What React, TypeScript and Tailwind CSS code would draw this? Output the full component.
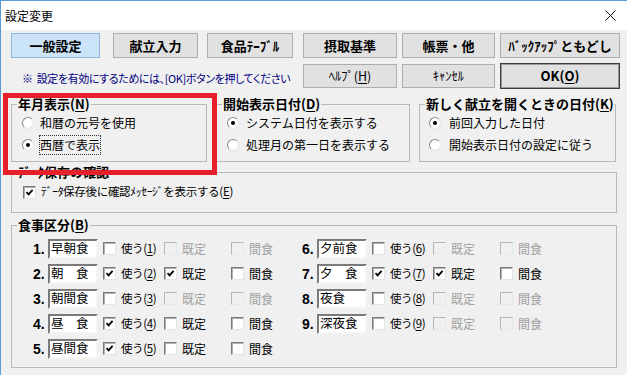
import React from "react";

const FONT = { fontFamily: '"Noto Sans CJK JP", "Noto Sans", sans-serif' };

function U({ children }: { children: React.ReactNode }) {
  return <span className="underline underline-offset-2">{children}</span>;
}

function Radio({ checked }: { checked?: boolean }) {
  return (
    <span className="w-[12px] h-[12px] rounded-full bg-white border border-t-[#8a8a8a] border-l-[#8a8a8a] border-b-[#e4e4e4] border-r-[#e4e4e4] flex items-center justify-center shrink-0">
      {checked && <span className="w-[4px] h-[4px] rounded-full bg-black" />}
    </span>
  );
}

function Check({ checked, disabled }: { checked?: boolean; disabled?: boolean }) {
  return (
    <span
      className={
        "w-[13px] h-[13px] border flex items-center justify-center shrink-0 " +
        (disabled
          ? "bg-[#f0f0f0] border-t-[#b5b5b5] border-l-[#b5b5b5] border-b-[#e8e8e8] border-r-[#e8e8e8]"
          : "bg-white border-t-[#7a7a7a] border-l-[#7a7a7a] border-b-[#e4e4e4] border-r-[#e4e4e4] shadow-[inset_1px_1px_0_#b0b0b0]")
      }
    >
      {checked && (
        <svg width="9" height="9" viewBox="0 0 9 9">
          <path d="M1.5 4.2 L3.6 6.4 L7.6 1.8" fill="none" stroke="#000" strokeWidth="1.8" />
        </svg>
      )}
    </span>
  );
}

function Btn({
  children,
  w,
  variant,
  bold = true,
  h = "h-[25px]",
}: {
  children: React.ReactNode;
  w: string;
  variant?: "active" | "default";
  bold?: boolean;
  h?: string;
}) {
  let cls = "bg-[#e1e1e1] border border-[#adadad]";
  if (variant === "active") cls = "bg-[#cce4f7] border border-[#8fb8e0]";
  if (variant === "default") cls = "bg-[#e1e1e1] border border-[#3c3c3c] shadow-[inset_0_0_0_1px_#9a9a9a]";
  return (
    <div
      className={`${w} ${h} ${cls} flex items-center justify-center shrink-0 text-black ${
        bold ? "font-bold text-[13px]" : "text-[12.5px]"
      }`}
    >
      {children}
    </div>
  );
}

function Group({
  title,
  className,
  children,
}: {
  title: React.ReactNode;
  className: string;
  children?: React.ReactNode;
}) {
  return (
    <fieldset className={`border border-[#b9b9b9] ${className}`}>
      <legend className="ml-[5px] px-[1px] text-[13px] font-bold leading-[16px] text-black">{title}</legend>
      {children}
    </fieldset>
  );
}

type Row = {
  n: string;
  name: string;
  use: boolean;
  def: boolean;
};

function MealRow({ r }: { r: Row }) {
  const dis = !r.use;
  return (
    <div className="flex items-center h-[25px] w-[269px]">
      <span
        className="w-[15px] text-[14px] font-bold leading-none text-black"
        style={{ fontFamily: '"Liberation Sans", Arial, sans-serif' }}
      >
        {r.n}.
      </span>
      <div className="w-[50px] h-[20px] bg-white border-2 border-t-[#7a7a7a] border-l-[#7a7a7a] border-b-[#f4f4f4] border-r-[#f4f4f4] flex items-center pl-[1px] text-[12.5px] leading-none text-black whitespace-pre">
        {r.name}
      </div>
      <div className="ml-[5px] w-[61px] flex items-center gap-[5px]">
        <Check checked={r.use} />
        <span className="text-[11.5px] text-black tracking-[-0.4px]">
          使う(<U>{r.n}</U>)
        </span>
      </div>
      <div className="w-[67px] flex items-center gap-[5px]">
        <Check checked={r.def} disabled={dis} />
        <span className={`text-[12px] ${dis ? "text-[#a0a0a0]" : "text-black"}`}>既定</span>
      </div>
      <div className="flex items-center gap-[5px]">
        <Check disabled={dis} />
        <span className={`text-[12px] ${dis ? "text-[#a0a0a0]" : "text-black"}`}>間食</span>
      </div>
    </div>
  );
}

const left: Row[] = [
  { n: "1", name: "早朝食", use: false, def: false },
  { n: "2", name: "朝　食", use: true, def: true },
  { n: "3", name: "朝間食", use: false, def: false },
  { n: "4", name: "昼　食", use: true, def: false },
  { n: "5", name: "昼間食", use: true, def: false },
];
const right: Row[] = [
  { n: "6", name: "夕前食", use: false, def: false },
  { n: "7", name: "夕　食", use: true, def: true },
  { n: "8", name: "夜食", use: false, def: false },
  { n: "9", name: "深夜食", use: false, def: false },
];

export default function App() {
  return (
    <div
      className="relative w-[627px] h-[375px] overflow-hidden bg-[#f0f0f0] border-l border-t border-[#5b9bd5] flex flex-col"
      style={FONT}
    >
      {/* title bar */}
      <div className="h-[29px] bg-white flex items-center justify-between pl-[4px] pr-[11px] shrink-0">
        <span className="text-[12px] text-black">設定変更</span>
        <svg width="11" height="11" viewBox="0 0 11 11">
          <path d="M0.5 0.5 L10.5 10.5 M10.5 0.5 L0.5 10.5" stroke="#111" strokeWidth="1" />
        </svg>
      </div>

      {/* buttons row 1 */}
      <div className="mt-[3px] flex items-center pl-[10px]">
        <Btn w="w-[89px]" variant="active">一般設定</Btn>
        <div className="ml-[13px]">
          <Btn w="w-[85px]">献立入力</Btn>
        </div>
        <div className="ml-[9px]">
          <Btn w="w-[86px]">食品ﾃｰﾌﾞﾙ</Btn>
        </div>
        <div className="ml-[10px]">
          <Btn w="w-[94px]">摂取基準</Btn>
        </div>
        <div className="ml-[5px]">
          <Btn w="w-[93px]">帳票・他</Btn>
        </div>
        <div className="ml-[5px]">
          <Btn w="w-[120px]">ﾊﾞｯｸｱｯﾌﾟともどし</Btn>
        </div>
      </div>

      {/* buttons row 2 */}
      <div className="mt-[6px] flex items-center h-[24px]">
        <div className="w-[302px] pl-[21px] shrink-0">
          <span className="text-[11px] tracking-[-0.4px] text-[#000080] whitespace-nowrap [font-feature-settings:'palt']">
            ※&nbsp;&nbsp;設定を有効にするためには、[OK]ボタンを押してください
          </span>
        </div>
        <Btn w="w-[94px]" bold={false} h="h-[24px]">
          ﾍﾙﾌﾟ(<U>H</U>)
        </Btn>
        <div className="ml-[5px]">
          <Btn w="w-[93px]" bold={false} h="h-[24px]">
            ｷｬﾝｾﾙ
          </Btn>
        </div>
        <div className="ml-[5px]">
          <Btn w="w-[120px]" variant="default" h="h-[26px]">
            OK(<U>O</U>)
          </Btn>
        </div>
      </div>

      {/* top groups */}
      <div className="mt-[8px] flex pl-[10px] gap-[9px]">
        <Group title={<>年月表示(<U>N</U>)</>} className="w-[196px] h-[66px]">
          <div className="flex flex-col pl-[10px] text-[12px] text-black">
            <div className="h-[22px] flex items-center gap-[6px]">
              <Radio />
              <span>和暦の元号を使用</span>
            </div>
            <div className="h-[22px] flex items-center gap-[6px]">
              <Radio checked />
              <span className="outline outline-1 outline-dotted outline-[#333] outline-offset-0">西暦で表示</span>
            </div>
          </div>
        </Group>
        <Group title={<>開始表示日付(<U>D</U>)</>} className="w-[194px] h-[66px]">
          <div className="flex flex-col pl-[10px] text-[12px] text-black">
            <div className="h-[22px] flex items-center gap-[7px]">
              <Radio checked />
              <span>システム日付を表示する</span>
            </div>
            <div className="h-[22px] flex items-center gap-[7px]">
              <Radio />
              <span>処理月の第一日を表示する</span>
            </div>
          </div>
        </Group>
        <Group title={<>新しく献立を開くときの日付(<U>K</U>)</>} className="w-[197px] h-[66px]">
          <div className="flex flex-col pl-[9px] text-[12px] text-black">
            <div className="h-[22px] flex items-center gap-[8px]">
              <Radio checked />
              <span>前回入力した日付</span>
            </div>
            <div className="h-[22px] flex items-center gap-[8px]">
              <Radio />
              <span>開始表示日付の設定に従う</span>
            </div>
          </div>
        </Group>
      </div>

      {/* data save group */}
      <div className="mt-[2px] pl-[10px]">
        <Group title="ﾃﾞｰﾀ保存の確認" className="w-[606px] h-[49px]">
          <div className="flex items-center h-[24px] pl-[11px] gap-[5px] text-[11.5px] tracking-[-0.3px] text-black">
            <Check checked />
            <span>
              ﾃﾞｰﾀ保存後に確認ﾒｯｾｰｼﾞを表示する(<U>E</U>)
            </span>
          </div>
        </Group>
      </div>

      {/* meal group */}
      <div className="mt-[4px] pl-[10px]">
        <Group title={<>食事区分(<U>B</U>)</>} className="w-[606px] h-[151px]">
          <div className="flex pl-[21px] pt-[3px]">
            <div className="flex flex-col">
              {left.map((r) => (
                <MealRow key={r.n} r={r} />
              ))}
            </div>
            <div className="flex flex-col">
              {right.map((r) => (
                <MealRow key={r.n} r={r} />
              ))}
            </div>
          </div>
        </Group>
      </div>

      {/* red annotation frame */}
      <div className="absolute left-[2px] top-[92px] w-[214px] h-[82px] border-[5px] border-[#e5202a] pointer-events-none" />
    </div>
  );
}
